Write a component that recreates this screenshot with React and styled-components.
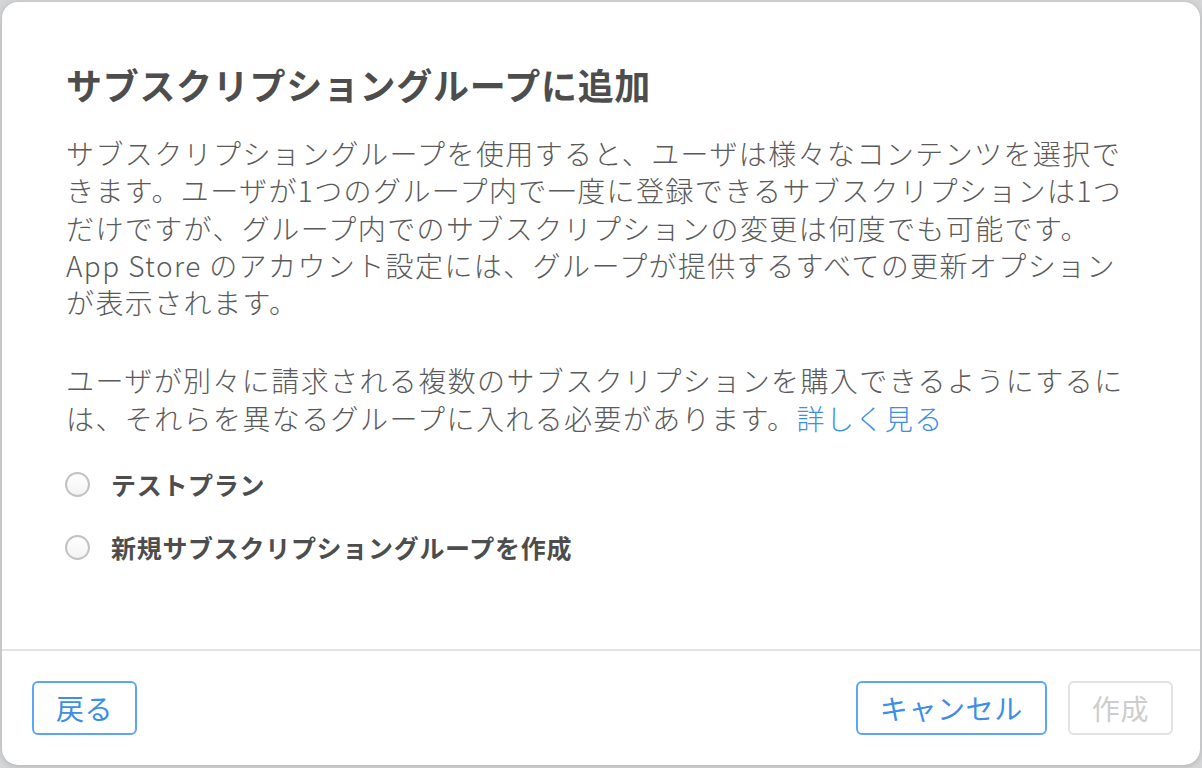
import styled, { createGlobalStyle } from "styled-components";

const GlobalStyle = createGlobalStyle`
  html, body {
    margin: 0;
    padding: 0;
    background: #d5d6d8;
  }
  body {
    font-family: "Noto Sans CJK JP", "Noto Sans", sans-serif;
    -webkit-font-smoothing: antialiased;
  }
`;

const options = ["テストプラン", "新規サブスクリプショングループを作成"];

function App() {
  return (
    <Backdrop>
      <GlobalStyle />
      <Dialog>
        <Content>
          <Title>サブスクリプショングループに追加</Title>
          <Paragraph>
            サブスクリプショングループを使用すると、ユーザは様々なコンテンツを選択で
            <br />
            きます。ユーザが1つのグループ内で一度に登録できるサブスクリプションは1つ
            <br />
            だけですが、グループ内でのサブスクリプションの変更は何度でも可能です。
            <br />
            App Store のアカウント設定には、グループが提供するすべての更新オプション
            <br />
            が表示されます。
          </Paragraph>
          <Paragraph $spaced>
            ユーザが別々に請求される複数のサブスクリプションを購入できるようにするに
            <br />
            は、それらを異なるグループに入れる必要があります。
            <Link href="#">詳しく見る</Link>
          </Paragraph>
          <RadioList>
            {options.map((label) => (
              <RadioRow key={label}>
                <RadioCircle />
                <RadioLabel>{label}</RadioLabel>
              </RadioRow>
            ))}
          </RadioList>
        </Content>
        <Footer>
          <Button>戻る</Button>
          <ButtonGroup>
            <Button>キャンセル</Button>
            <Button $disabled>作成</Button>
          </ButtonGroup>
        </Footer>
      </Dialog>
    </Backdrop>
  );
}

//CSS//

const Backdrop = styled.div`
  min-height: 100vh;
  box-sizing: border-box;
  padding: 2px;
`;

const Dialog = styled.div`
  height: 763px;
  display: flex;
  flex-direction: column;
  background: #ffffff;
  border-radius: 16px;
  box-shadow: 0 1px 6px rgba(0, 0, 0, 0.18);
  overflow: hidden;
`;

const Content = styled.div`
  flex: 1;
  padding: 61px 40px 0 64px;
`;

const Title = styled.h1`
  margin: 0;
  font-size: 36px;
  line-height: 43px;
  font-weight: 700;
  letter-spacing: 0.7px;
  color: #4d4d4d;
`;

const Paragraph = styled.p`
  margin: ${(p) => (p.$spaced ? "41px" : "29px")} 0 0;
  font-size: 28px;
  font-weight: 300;
  line-height: 37.25px;
  letter-spacing: 1.4px;
  color: #5a5a5a;
  white-space: nowrap;
`;

const Link = styled.a`
  color: #3d8ee8;
  text-decoration: none;
`;

const RadioList = styled.div`
  margin-top: 29px;
  display: flex;
  flex-direction: column;
  gap: 26px;
`;

const RadioRow = styled.label`
  display: flex;
  align-items: center;
  height: 37px;
  cursor: pointer;
`;

const RadioCircle = styled.span`
  width: 25px;
  height: 25px;
  box-sizing: border-box;
  margin-left: -1px;
  border: 2px solid #c2c2c2;
  border-radius: 50%;
  background: linear-gradient(#ffffff, #f3f3f3);
`;

const RadioLabel = styled.span`
  margin-left: 21px;
  font-size: 25px;
  letter-spacing: 0.7px;
  font-weight: 700;
  color: #4d4d4d;
`;

const Footer = styled.div`
  display: flex;
  justify-content: space-between;
  align-items: center;
  border-top: 2px solid #e4e4e4;
  padding: 30px 27px 30px 30px;
`;

const ButtonGroup = styled.div`
  display: flex;
  gap: 21px;
`;

const Button = styled.button`
  height: 54px;
  box-sizing: border-box;
  padding: 0 22px;
  border: 2px solid ${(p) => (p.$disabled ? "#e2e2e2" : "#5ca6f7")};
  border-radius: 6px;
  background: #ffffff;
  font-family: inherit;
  font-size: 28px;
  letter-spacing: 0.6px;
  color: ${(p) => (p.$disabled ? "#cdcdcd" : "#3d8ee8")};
  cursor: ${(p) => (p.$disabled ? "default" : "pointer")};
`;

export default App;
